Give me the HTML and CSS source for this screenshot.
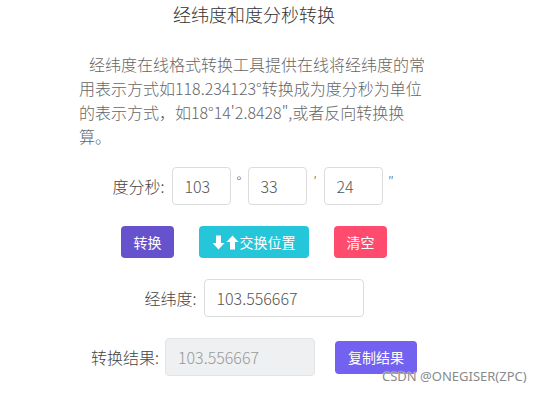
FILE: index.html
```html
<!DOCTYPE html>
<html lang="zh-CN">
<head>
<meta charset="utf-8">
<title>经纬度和度分秒转换</title>
<link rel="stylesheet" href="styles.css">
</head>
<body>
<div class="page">
  <h1 class="title">经纬度和度分秒转换</h1>
  <p class="intro">经纬度在线格式转换工具提供在线将经纬度的常用表示方式如118.234123°转换成为度分秒为单位的表示方式，如18°14'2.8428",或者反向转换换算。</p>

  <div class="row row-dms">
    <label class="label">度分秒:</label>
    <input class="field field-small" type="text" value="103">
    <span class="unit">°</span>
    <input class="field field-small" type="text" value="33">
    <span class="unit">′</span>
    <input class="field field-small" type="text" value="24">
    <span class="unit">″</span>
  </div>

  <div class="row row-buttons">
    <button class="btn btn-convert">转换</button>
    <button class="btn btn-swap"><svg class="arrows" width="26" height="15" viewBox="0 0 26 15"><path d="M3 0.5h5v7.5h3.5L5.5 14.5L-0.5 8H3z" fill="#fff"/><path d="M17 14.5h5V7h3.5L19.5 0.5L13.5 7H17z" fill="#fff"/></svg>交换位置</button>
    <button class="btn btn-clear">清空</button>
  </div>

  <div class="row row-decimal">
    <label class="label">经纬度:</label>
    <input class="field field-decimal" type="text" value="103.556667">
  </div>

  <div class="row row-result">
    <label class="label label-result">转换结果:</label>
    <input class="field field-result" type="text" value="103.556667" disabled>
    <button class="btn btn-copy">复制结果</button>
  </div>
</div>
<div class="watermark">CSDN @ONEGISER(ZPC)</div>
</body>
</html>
```

FILE: styles.css
```css
html, body {
  margin: 0;
  padding: 0;
  background: #fff;
}

body {
  font-family: "Noto Sans CJK SC", "Noto Sans", sans-serif;
  font-weight: 300;
  color: #333;
  position: relative;
  width: 537px;
  height: 393px;
  overflow: hidden;
}

.page {
  width: 508px;
  display: flex;
  flex-direction: column;
  align-items: center;
}

.title {
  margin: 0;
  font-size: 18px;
  font-weight: 300;
  line-height: 28px;
  color: #333;
}

.intro {
  margin: 24px 0 0 0;
  width: 350px;
  font-size: 16px;
  line-height: 24px;
  color: #666;
  text-indent: 10px;
}

.row {
  display: flex;
  align-items: center;
}

.row-dms {
  margin-top: 19px;
  padding-left: 4px;
}

.label {
  font-size: 16px;
  color: #444;
  margin-right: 7px;
}

.field {
  box-sizing: border-box;
  height: 38px;
  border: 1px solid #dcdcdc;
  border-radius: 4px;
  padding: 0 12px;
  font-family: "Noto Sans CJK SC", "Noto Sans", sans-serif;
  font-weight: 300;
  font-size: 16px;
  color: #555;
  background: #fff;
  outline: none;
}

.field-small {
  width: 59px;
}

.unit {
  width: 17px;
  text-align: center;
  font-size: 14px;
  color: #555;
  align-self: flex-start;
  margin-top: 4px;
}

.row-buttons {
  margin-top: 21px;
  gap: 25px;
}

.btn {
  box-sizing: border-box;
  height: 32px;
  border: none;
  border-radius: 4px;
  padding: 0 10px;
  font-family: "Noto Sans CJK SC", "Noto Sans", sans-serif;
  font-weight: 400;
  font-size: 14px;
  color: #fff;
  display: inline-flex;
  align-items: center;
  justify-content: center;
}

.btn-convert {
  width: 53px;
  background: #6752ce;
}

.btn-swap {
  width: 110px;
  background: #26c6da;
}

.arrows {
  margin-right: 1px;
  flex: none;
}

.btn-clear {
  width: 53px;
  background: #ff4b6e;
}

.row-decimal {
  margin-top: 21px;
}

.field-decimal {
  width: 160px;
}

.row-result {
  margin-top: 21px;
}

.label-result {
  margin-right: 6px;
}

.field-result {
  width: 150px;
  background: #eef0f2;
  color: #999;
  border-color: #e2e4e7;
}

.btn-copy {
  width: 82px;
  height: 33px;
  margin-left: 20px;
  background: #7361f0;
}

.watermark {
  position: absolute;
  left: 382px;
  top: 367px;
  font-family: "Noto Sans", sans-serif;
  font-weight: 400;
  font-size: 13px;
  color: #8a8a8a;
  text-shadow: 0 0 2px #fff, 0 0 1px #fff;
}
```
